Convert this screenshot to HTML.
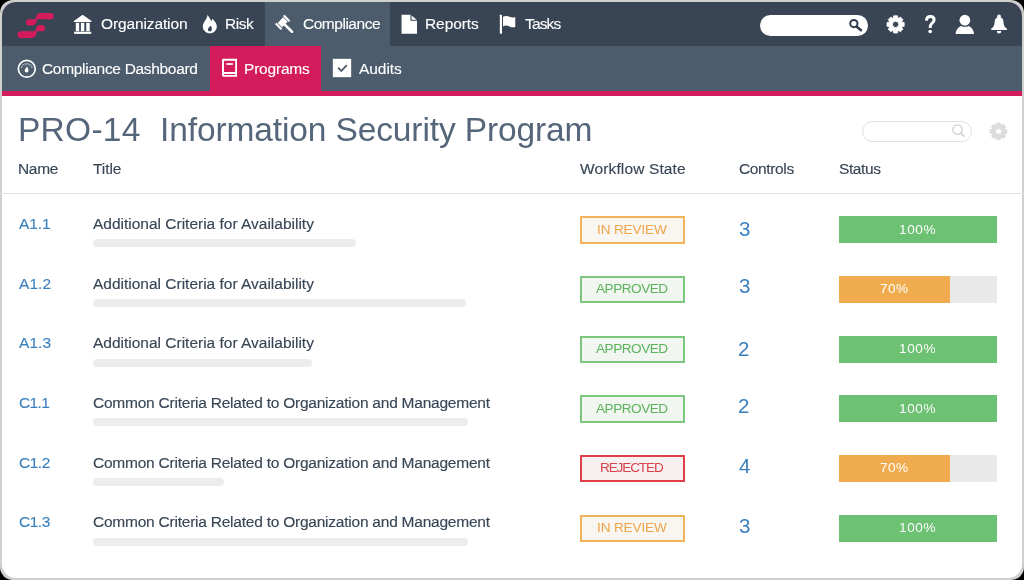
<!DOCTYPE html>
<html><head><meta charset="utf-8">
<style>
*{margin:0;padding:0;box-sizing:border-box}
html,body{width:1024px;height:580px;background:#000;overflow:hidden}
body{font-family:"Liberation Sans",sans-serif;position:relative}
#frame{position:absolute;left:0;top:0;width:1024px;height:580px;border-radius:13px;background:#d0d0d0;overflow:hidden}
#inner{position:absolute;left:2px;top:2px;width:1020px;height:576px;border-radius:14px;background:#fff;overflow:hidden}
.a{position:absolute}
.t{position:absolute;white-space:nowrap;line-height:1;will-change:transform}
.s3{-webkit-text-stroke-width:0.15px}.s1{-webkit-text-stroke-width:0.12px}
svg{position:absolute;overflow:visible}
</style></head>
<body>
<div id="frame"></div>
<div id="inner"></div>
<div class="a" style="left:0;top:0;width:1024px;height:580px;border-radius:13px;overflow:hidden">
<div class="a" style="left:2px;top:2px;width:1020px;height:576px;border-radius:14px;overflow:hidden">
<div class="a" style="left:-2px;top:-2px;width:1024px;height:580px">
<div class="a" style="left:0;top:0;width:1024px;height:46px;background:#394555"></div>
<div class="a" style="left:265px;top:0;width:125px;height:46px;background:#4c5c6d"></div>
<div class="a" style="left:0;top:46px;width:1024px;height:45px;background:#4c5c6d"></div>
<div class="a" style="left:210px;top:46px;width:111px;height:45px;background:#d41b5b"></div>
<div class="a" style="left:0;top:91px;width:1024px;height:5px;background:#d41b5b"></div>
</div></div></div>
<svg style="left:0;top:0" width="1024" height="60" viewBox="0 0 1024 60">
<path fill="#d41b5b" d="M35.6 19.3 A4.6 6.3 0 0 1 40.2 13 H50.65 A3.15 3.15 0 0 1 50.65 19.3 Z"/>
<path fill="#d41b5b" d="M37.0 19.3 H29.15 A3.15 3.15 0 0 0 29.15 25.6 H32.2 A4.8 6.3 0 0 0 37.0 19.3 Z"/>
<path fill="#d41b5b" d="M35.4 31.35 A4.7 6.35 0 0 1 40.1 25 H41.8 A3.175 3.175 0 0 1 41.8 31.35 Z"/>
<path fill="#d41b5b" d="M36.9 31.35 H20.85 A3.275 3.275 0 0 0 20.85 37.9 H32.0 A4.9 6.55 0 0 0 36.9 31.35 Z"/>
</svg>
<svg style="left:70px;top:10px" width="26" height="28" viewBox="0 0 539 580">
<path fill="#ffffff" d="M262 100 L445 228 L445 250 L80 250 L80 228 Z"/>
<rect fill="#ffffff" x="120" y="265" width="70" height="175"/>
<rect fill="#ffffff" x="226" y="265" width="70" height="175"/>
<rect fill="#ffffff" x="337" y="265" width="72" height="175"/>
<rect fill="#ffffff" x="85" y="450" width="355" height="45"/>
</svg>
<svg style="left:198px;top:10px" width="24" height="28" viewBox="0 0 497 580">
<path fill="#ffffff" fill-rule="evenodd" d="M195 105 C230 150 265 190 272 240 C285 215 295 195 300 180 C350 230 390 290 390 340 C390 420 325 480 245 480 C165 480 100 420 100 340 C100 250 190 200 195 105Z M270 320 C240 345 205 370 205 405 C205 430 225 445 245 445 C270 445 290 425 288 395 C287 370 275 350 270 320Z"/>
</svg>
<svg style="left:270px;top:10px" width="30" height="28" viewBox="0 0 621 580">
<g transform="rotate(45 262 256)" fill="#ffffff">
<rect x="176" y="117" width="172" height="44" rx="12"/>
<rect x="176" y="351" width="172" height="44" rx="12"/>
<rect x="197" y="175" width="130" height="162"/>
<rect x="262" y="231" width="300" height="52" rx="26"/>
</g>
</svg>
<svg style="left:396px;top:10px" width="26" height="28" viewBox="0 0 539 580">
<path fill="#ffffff" d="M115 100 H300 V222 H435 V490 H115Z"/>
<path fill="#ffffff" d="M322 112 L430 202 L322 202Z"/>
</svg>
<svg style="left:495px;top:10px" width="26" height="28" viewBox="0 0 539 580">
<rect fill="#ffffff" x="100" y="100" width="45" height="390" rx="8"/>
<path fill="#ffffff" d="M165 140 C200 125 250 115 300 140 C340 160 380 160 420 145 L420 350 C380 365 340 360 300 340 C250 315 200 320 165 340Z"/>
</svg>
<div class="a" style="left:760px;top:15px;width:108px;height:21px;border-radius:10.5px;background:#fff"></div>
<svg style="left:756px;top:8px" width="120" height="32" viewBox="0 0 1024 273">
<circle cx="835" cy="133" r="31" fill="none" stroke="#2f3b4b" stroke-width="17"/>
<line x1="860" y1="160" x2="896" y2="190" stroke="#2f3b4b" stroke-width="21" stroke-linecap="round"/>
</svg>
<svg style="left:0;top:0" width="1024" height="60" viewBox="0 0 1024 60"><path fill="#ffffff" stroke="#ffffff" stroke-width="0.8" stroke-linejoin="round" fill-rule="evenodd" d="M902.26 22.24 L904.20 22.51 L904.20 26.29 L902.26 26.56 L901.84 27.58 L903.01 29.14 L900.34 31.81 L898.78 30.64 L897.76 31.06 L897.49 33.00 L893.71 33.00 L893.44 31.06 L892.42 30.64 L890.86 31.81 L888.19 29.14 L889.36 27.58 L888.94 26.56 L887.00 26.29 L887.00 22.51 L888.94 22.24 L889.36 21.22 L888.19 19.66 L890.86 16.99 L892.42 18.16 L893.44 17.74 L893.71 15.80 L897.49 15.80 L897.76 17.74 L898.78 18.16 L900.34 16.99 L903.01 19.66 L901.84 21.22Z M898.70 24.40 A3.1 3.1 0 1 0 892.50 24.40 A3.1 3.1 0 1 0 898.70 24.40Z"/></svg>
<svg style="left:882px;top:10px" width="60" height="30" viewBox="0 0 1024 512">
<path fill="none" stroke="#ffffff" stroke-width="50" d="M759 180 C762 128 794 110 825 110 C864 110 890 134 890 167 C890 203 866 218 847 233 C828 248 822 266 822 308"/>
<circle cx="822" cy="366" r="31" fill="#ffffff"/>
</svg>
<svg style="left:950px;top:10px" width="64" height="30" viewBox="0 0 1024 480">
<circle cx="238" cy="163" r="86" fill="#ffffff"/>
<path fill="#ffffff" d="M90 382 C95 322 130 272 178 256 C205 274 272 274 298 256 C345 272 380 322 385 382Z"/>
<circle cx="785" cy="100" r="30" fill="#ffffff"/>
<path fill="#ffffff" d="M785 112 C735 114 718 145 714 195 C710 245 700 272 660 296 L660 318 L910 318 L910 296 C870 272 860 245 856 195 C852 145 835 114 785 112Z"/>
<path fill="#ffffff" d="M749 337 A36 40 0 0 0 821 337Z"/>
</svg>
<svg style="left:14px;top:56px" width="26" height="26" viewBox="0 0 580 580">
<circle cx="285" cy="285" r="188" fill="none" stroke="#ffffff" stroke-width="38"/>
<line x1="181.2" y1="258.0" x2="155.2" y2="247.6" stroke="#ffffff" stroke-width="20"/><line x1="198.0" y1="229.5" x2="176.2" y2="211.9" stroke="#ffffff" stroke-width="20"/><line x1="222.4" y1="207.1" x2="206.7" y2="183.9" stroke="#ffffff" stroke-width="20"/><line x1="252.3" y1="192.9" x2="244.1" y2="166.1" stroke="#ffffff" stroke-width="20"/><line x1="285.0" y1="188.0" x2="285.0" y2="160.0" stroke="#ffffff" stroke-width="20"/><line x1="317.7" y1="192.9" x2="325.9" y2="166.1" stroke="#ffffff" stroke-width="20"/><line x1="347.6" y1="207.1" x2="363.3" y2="183.9" stroke="#ffffff" stroke-width="20"/><line x1="372.0" y1="229.5" x2="393.8" y2="211.9" stroke="#ffffff" stroke-width="20"/><line x1="388.8" y1="258.0" x2="414.8" y2="247.6" stroke="#ffffff" stroke-width="20"/>
<path fill="#ffffff" d="M292 222 C302 270 324 292 324 325 C324 352 304 370 282 370 C258 370 238 352 238 325 C238 292 275 270 292 222Z"/>
</svg>
<svg style="left:216px;top:54px" width="28" height="28" viewBox="0 0 580 580">
<path fill="#ffffff" fill-rule="evenodd" d="M155 100 H435 V470 H155 C137 470 125 458 125 440 V130 C125 112 137 100 155 100Z M165 140 V375 H398 V140Z M165 415 V435 H398 V415Z"/>
<rect fill="#ffffff" x="215" y="190" width="135" height="35"/>
</svg>
<svg style="left:328px;top:54px" width="28" height="28" viewBox="0 0 580 580">
<rect fill="#ffffff" x="100" y="100" width="380" height="380"/>
<path fill="none" stroke="#4c5c6d" stroke-width="36" d="M208 282 L276 350 L390 230"/>
</svg>
<div class="t s1" style="left:100.70px;top:16.38px;font-size:15.5px;color:#ffffff;letter-spacing:-0.124px;">Organization</div>
<div class="t s1" style="left:224.70px;top:16.38px;font-size:15.5px;color:#ffffff;letter-spacing:-0.462px;">Risk</div>
<div class="t s1" style="left:302.80px;top:16.38px;font-size:15.5px;color:#ffffff;letter-spacing:-0.480px;">Compliance</div>
<div class="t s1" style="left:424.60px;top:16.38px;font-size:15.5px;color:#ffffff;letter-spacing:-0.087px;">Reports</div>
<div class="t s1" style="left:524.50px;top:16.38px;font-size:15.5px;color:#ffffff;letter-spacing:-0.868px;">Tasks</div>
<div class="t s1" style="left:42.20px;top:60.88px;font-size:15.5px;color:#ffffff;letter-spacing:-0.319px;">Compliance Dashboard</div>
<div class="t s1" style="left:244.00px;top:60.88px;font-size:15.5px;color:#ffffff;letter-spacing:-0.205px;">Programs</div>
<div class="t s1" style="left:359.00px;top:60.88px;font-size:15.5px;color:#ffffff;letter-spacing:-0.066px;">Audits</div>
<div class="t" style="left:17.50px;top:112.64px;font-size:33.5px;color:#56667a;letter-spacing:0.264px;">PRO-14</div>
<div class="t" style="left:159.60px;top:112.64px;font-size:33.5px;color:#56667a;letter-spacing:-0.117px;">Information Security Program</div>
<div class="a" style="left:862px;top:120.5px;width:110px;height:21.5px;border-radius:11px;border:1.8px solid #dfdfdf"></div>
<svg style="left:856px;top:114px" width="160" height="34" viewBox="0 0 1024 218">
<circle cx="650" cy="100" r="30" fill="none" stroke="#d6d6d6" stroke-width="10"/>
<line x1="672" y1="122" x2="692" y2="142" stroke="#d6d6d6" stroke-width="12" stroke-linecap="round"/>
</svg>
<svg style="left:0;top:100px" width="1024" height="60" viewBox="0 100 1024 60"><path fill="#dcdcdc" stroke="#dcdcdc" stroke-width="0.8" stroke-linejoin="round" fill-rule="evenodd" d="M1005.07 129.30 L1007.00 129.56 L1007.00 133.24 L1005.07 133.50 L1004.66 134.49 L1005.84 136.04 L1003.24 138.64 L1001.69 137.46 L1000.70 137.87 L1000.44 139.80 L996.76 139.80 L996.50 137.87 L995.51 137.46 L993.96 138.64 L991.36 136.04 L992.54 134.49 L992.13 133.50 L990.20 133.24 L990.20 129.56 L992.13 129.30 L992.54 128.31 L991.36 126.76 L993.96 124.16 L995.51 125.34 L996.50 124.93 L996.76 123.00 L1000.44 123.00 L1000.70 124.93 L1001.69 125.34 L1003.24 124.16 L1005.84 126.76 L1004.66 128.31Z M1001.60 131.40 A3.0 3.0 0 1 0 995.60 131.40 A3.0 3.0 0 1 0 1001.60 131.40Z"/></svg>
<div class="t s3" style="left:18.00px;top:161.48px;font-size:15.5px;color:#384656;letter-spacing:-0.342px;">Name</div>
<div class="t s3" style="left:93.20px;top:161.48px;font-size:15.5px;color:#384656;letter-spacing:-0.072px;">Title</div>
<div class="t s3" style="left:580.00px;top:161.48px;font-size:15.5px;color:#384656;letter-spacing:0.129px;">Workflow State</div>
<div class="t s3" style="left:738.60px;top:161.48px;font-size:15.5px;color:#384656;letter-spacing:-0.367px;">Controls</div>
<div class="t s3" style="left:838.60px;top:161.48px;font-size:15.5px;color:#384656;letter-spacing:-0.398px;">Status</div>
<div class="a" style="left:0;top:192.5px;width:1024px;height:1.5px;background:#e2e2e2"></div>
<div class="t s1" style="left:18.50px;top:215.88px;font-size:15.5px;color:#3b80be;letter-spacing:-0.055px;">A1.1</div>
<div class="t s3" style="left:92.70px;top:215.88px;font-size:15.5px;color:#384656;letter-spacing:-0.007px;">Additional Criteria for Availability</div>
<div class="a" style="left:92.5px;top:239.2px;width:263.5px;height:8px;border-radius:4px;background:#ececec"></div>
<div class="a" style="left:580px;top:216.4px;width:105px;height:27.4px;border:2px solid #f0b35a;background:#f9f5f0"></div>
<div class="t" style="left:596.70px;top:222.59px;font-size:13.6px;color:#eda64a;letter-spacing:-0.146px;">IN REVIEW</div>
<div class="t" style="left:738.70px;top:219.25px;font-size:20.5px;color:#3b80be;letter-spacing:0.000px;">3</div>
<div class="a" style="left:838.9px;top:216.4px;width:158.3px;height:27px;background:#e9e9e9"></div>
<div class="a" style="left:838.9px;top:216.4px;width:158.3px;height:27px;background:#6dc173"></div>
<div class="t" style="left:899.40px;top:222.69px;font-size:13.6px;color:#fff;letter-spacing:0.573px;">100%</div>
<div class="t s1" style="left:18.50px;top:275.56px;font-size:15.5px;color:#3b80be;letter-spacing:0.078px;">A1.2</div>
<div class="t s3" style="left:92.70px;top:275.56px;font-size:15.5px;color:#384656;letter-spacing:-0.007px;">Additional Criteria for Availability</div>
<div class="a" style="left:92.5px;top:298.9px;width:373.5px;height:8px;border-radius:4px;background:#ececec"></div>
<div class="a" style="left:580px;top:276.1px;width:105px;height:27.4px;border:2px solid #7dc67d;background:#f1f6f1"></div>
<div class="t" style="left:596.10px;top:282.27px;font-size:13.6px;color:#5db35d;letter-spacing:-0.489px;">APPROVED</div>
<div class="t" style="left:738.70px;top:276.45px;font-size:20.5px;color:#3b80be;letter-spacing:0.000px;">3</div>
<div class="a" style="left:838.9px;top:276.1px;width:158.3px;height:27px;background:#e9e9e9"></div>
<div class="a" style="left:838.9px;top:276.1px;width:110.7px;height:27px;background:#efab4e"></div>
<div class="t" style="left:880.40px;top:282.37px;font-size:13.6px;color:#fff;letter-spacing:0.390px;">70%</div>
<div class="t s1" style="left:18.50px;top:335.24px;font-size:15.5px;color:#3b80be;letter-spacing:0.078px;">A1.3</div>
<div class="t s3" style="left:92.70px;top:335.24px;font-size:15.5px;color:#384656;letter-spacing:-0.007px;">Additional Criteria for Availability</div>
<div class="a" style="left:92.5px;top:358.6px;width:219.5px;height:8px;border-radius:4px;background:#ececec"></div>
<div class="a" style="left:580px;top:335.8px;width:105px;height:27.4px;border:2px solid #7dc67d;background:#f1f6f1"></div>
<div class="t" style="left:596.10px;top:341.95px;font-size:13.6px;color:#5db35d;letter-spacing:-0.489px;">APPROVED</div>
<div class="t" style="left:737.70px;top:338.65px;font-size:20.5px;color:#3b80be;letter-spacing:0.000px;">2</div>
<div class="a" style="left:838.9px;top:335.8px;width:158.3px;height:27px;background:#e9e9e9"></div>
<div class="a" style="left:838.9px;top:335.8px;width:158.3px;height:27px;background:#6dc173"></div>
<div class="t" style="left:899.40px;top:342.05px;font-size:13.6px;color:#fff;letter-spacing:0.573px;">100%</div>
<div class="t s1" style="left:18.50px;top:394.92px;font-size:15.5px;color:#3b80be;letter-spacing:-0.607px;">C1.1</div>
<div class="t s3" style="left:92.70px;top:394.92px;font-size:15.5px;color:#384656;letter-spacing:-0.231px;">Common Criteria Related to Organization and Management</div>
<div class="a" style="left:92.5px;top:418.2px;width:375.5px;height:8px;border-radius:4px;background:#ececec"></div>
<div class="a" style="left:580px;top:395.4px;width:105px;height:27.4px;border:2px solid #7dc67d;background:#f1f6f1"></div>
<div class="t" style="left:596.10px;top:401.63px;font-size:13.6px;color:#5db35d;letter-spacing:-0.489px;">APPROVED</div>
<div class="t" style="left:737.70px;top:396.05px;font-size:20.5px;color:#3b80be;letter-spacing:0.000px;">2</div>
<div class="a" style="left:838.9px;top:395.4px;width:158.3px;height:27px;background:#e9e9e9"></div>
<div class="a" style="left:838.9px;top:395.4px;width:158.3px;height:27px;background:#6dc173"></div>
<div class="t" style="left:899.40px;top:401.73px;font-size:13.6px;color:#fff;letter-spacing:0.573px;">100%</div>
<div class="t s1" style="left:18.50px;top:454.60px;font-size:15.5px;color:#3b80be;letter-spacing:-0.473px;">C1.2</div>
<div class="t s3" style="left:92.70px;top:454.60px;font-size:15.5px;color:#384656;letter-spacing:-0.231px;">Common Criteria Related to Organization and Management</div>
<div class="a" style="left:92.5px;top:477.9px;width:131.5px;height:8px;border-radius:4px;background:#ececec"></div>
<div class="a" style="left:580px;top:455.1px;width:105px;height:27.4px;border:2px solid #e03e48;background:#f7f0f0"></div>
<div class="t" style="left:599.80px;top:461.31px;font-size:13.6px;color:#d9434c;letter-spacing:-1.148px;">REJECTED</div>
<div class="t" style="left:738.70px;top:455.55px;font-size:20.5px;color:#3b80be;letter-spacing:0.000px;">4</div>
<div class="a" style="left:838.9px;top:455.1px;width:158.3px;height:27px;background:#e9e9e9"></div>
<div class="a" style="left:838.9px;top:455.1px;width:110.7px;height:27px;background:#efab4e"></div>
<div class="t" style="left:880.40px;top:461.41px;font-size:13.6px;color:#fff;letter-spacing:0.390px;">70%</div>
<div class="t s1" style="left:18.50px;top:514.28px;font-size:15.5px;color:#3b80be;letter-spacing:-0.473px;">C1.3</div>
<div class="t s3" style="left:92.70px;top:514.28px;font-size:15.5px;color:#384656;letter-spacing:-0.231px;">Common Criteria Related to Organization and Management</div>
<div class="a" style="left:92.5px;top:537.6px;width:375.5px;height:8px;border-radius:4px;background:#ececec"></div>
<div class="a" style="left:580px;top:514.8px;width:105px;height:27.4px;border:2px solid #f0b35a;background:#f9f5f0"></div>
<div class="t" style="left:596.70px;top:520.99px;font-size:13.6px;color:#eda64a;letter-spacing:-0.146px;">IN REVIEW</div>
<div class="t" style="left:738.70px;top:516.45px;font-size:20.5px;color:#3b80be;letter-spacing:0.000px;">3</div>
<div class="a" style="left:838.9px;top:514.8px;width:158.3px;height:27px;background:#e9e9e9"></div>
<div class="a" style="left:838.9px;top:514.8px;width:158.3px;height:27px;background:#6dc173"></div>
<div class="t" style="left:899.40px;top:521.09px;font-size:13.6px;color:#fff;letter-spacing:0.573px;">100%</div>
</body></html>
